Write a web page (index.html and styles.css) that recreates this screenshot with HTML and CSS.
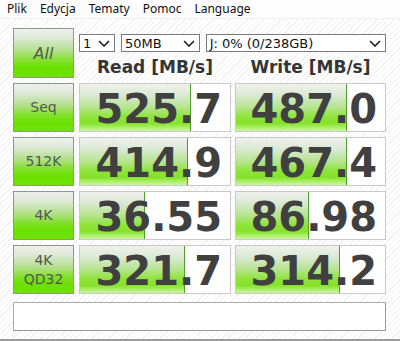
FILE: index.html
```html
<!DOCTYPE html>
<html>
<head>
<meta charset="utf-8">
<link rel="stylesheet" href="styles.css">
</head>
<body>
<div class="menubar">
  <span class="menu-item">Plik</span>
  <span class="menu-item">Edycja</span>
  <span class="menu-item">Tematy</span>
  <span class="menu-item">Pomoc</span>
  <span class="menu-item">Language</span>
</div>
<div class="main">
  <div class="grid">
    <div class="btn btn-all">All</div>
    <div class="top">
      <div class="combos">
        <div class="combo combo-count"><span>1</span><svg class="chev" width="12" height="7" viewBox="0 0 12 7"><path d="M1 1 L6 6 L11 1" fill="none" stroke="#1e1e1e" stroke-width="1.6"/></svg></div>
        <div class="combo combo-size"><span>50MB</span><svg class="chev" width="12" height="7" viewBox="0 0 12 7"><path d="M1 1 L6 6 L11 1" fill="none" stroke="#1e1e1e" stroke-width="1.6"/></svg></div>
        <div class="combo combo-drive"><span>J: 0% (0/238GB)</span><svg class="chev" width="12" height="7" viewBox="0 0 12 7"><path d="M1 1 L6 6 L11 1" fill="none" stroke="#1e1e1e" stroke-width="1.6"/></svg></div>
      </div>
      <div class="heads">
        <div class="head head-read">Read [MB/s]</div>
        <div class="head head-write">Write [MB/s]</div>
      </div>
    </div>

    <div class="btn">Seq</div>
    <div class="val"><div class="bar" style="width:110px"></div><span class="num">525.7</span></div>
    <div class="val"><div class="bar" style="width:110px"></div><span class="num">487.0</span></div>

    <div class="btn">512K</div>
    <div class="val"><div class="bar" style="width:107px"></div><span class="num">414.9</span></div>
    <div class="val"><div class="bar" style="width:110px"></div><span class="num">467.4</span></div>

    <div class="btn">4K</div>
    <div class="val"><div class="bar" style="width:64px"></div><span class="num">36.55</span></div>
    <div class="val"><div class="bar" style="width:72px"></div><span class="num">86.98</span></div>

    <div class="btn btn-two">4K<br>QD32</div>
    <div class="val"><div class="bar" style="width:104px"></div><span class="num">321.7</span></div>
    <div class="val"><div class="bar" style="width:103px"></div><span class="num">314.2</span></div>
  </div>
  <div class="comment"></div>
</div>
<div class="bottomline"></div>
</body>
</html>
```

FILE: styles.css
```css
html, body {
  margin: 0;
  padding: 0;
}
body {
  width: 400px;
  height: 341px;
  overflow: hidden;
  background-color: #ffffff;
  background-image: repeating-linear-gradient(-45deg, #ffffff 0px, #ffffff 3px, #f1f1f1 3px, #f1f1f1 4px);
  font-family: "Noto Sans", "DejaVu Sans", sans-serif;
}
.menubar {
  height: 18px;
  background: #fdfdfd;
  border-bottom: 1px solid #efefef;
  display: flex;
  align-items: center;
  padding-left: 7px;
  font-family: "Noto Sans", sans-serif;
  font-size: 12px;
  color: #111;
}
.menu-item {
  margin-right: 13px;
  line-height: 18px;
}
.main {
  padding: 9px 0 0 13px;
}
.grid {
  display: grid;
  grid-template-columns: 62px 152px 151px;
  grid-template-rows: 50px 49px 49px 49px 49px;
  column-gap: 4px;
  row-gap: 5px;
}
.btn {
  width: 61px;
  box-sizing: border-box;
  border: 1px solid #8a9a86;
  background: linear-gradient(to bottom, #eef1ec 0%, #dfe9da 18%, #b4e08c 45%, #7ee023 68%, #6ae000 82%, #70e206 100%);
  display: flex;
  align-items: center;
  justify-content: center;
  text-align: center;
  font-family: "DejaVu Sans", sans-serif;
  font-size: 14px;
  color: #505a50;
  line-height: 19px;
}
.btn-all {
  font-size: 16px;
  font-style: italic;
}
.top {
  grid-column: 2 / 4;
  display: flex;
  flex-direction: column;
}
.combos {
  display: flex;
  margin-top: 6px;
  gap: 6px;
}
.combo {
  box-sizing: border-box;
  height: 18px;
  border: 1px solid #7a7a7a;
  background: #fff;
  display: flex;
  align-items: center;
  justify-content: space-between;
  padding: 0 4px 0 3px;
  font-family: "DejaVu Sans", sans-serif;
  font-size: 13px;
  color: #111;
}
.combo-count { width: 36px; }
.combo-size { width: 79px; }
.combo-drive { width: 181px; }
.chev {
  display: block;
}
.heads {
  display: flex;
  gap: 4px;
  margin-top: 5px;
}
.head {
  font-family: "DejaVu Sans", sans-serif;
  font-weight: bold;
  font-size: 17px;
  line-height: 20px;
  color: #353535;
  text-align: center;
}
.head-read { width: 152px; }
.head-write { width: 151px; }
.val {
  position: relative;
  box-sizing: border-box;
  border: 1px solid #c9c9c9;
  background: #fff;
  display: flex;
  align-items: center;
  justify-content: flex-end;
  padding-right: 8px;
}
.bar {
  position: absolute;
  left: 0;
  top: 0;
  bottom: 0;
  border-right: 1px solid #4e9e2e;
  background: linear-gradient(to bottom, #eef2ec 0%, #dde9d7 22%, #b6e48e 50%, #8ee43a 70%, #86e22a 84%, #a8ee66 92%, #cdf6a4 100%);
}
.num {
  position: relative;
  font-family: "DejaVu Sans", sans-serif;
  font-weight: bold;
  font-size: 40px;
  line-height: 40px;
  color: #404040;
  margin-top: 3px;
}
.comment {
  margin-top: 8px;
  width: 373px;
  height: 29px;
  box-sizing: border-box;
  border: 1px solid #ababab;
  border-bottom-color: #9a9a9a;
  border-right-color: #9a9a9a;
  background: #fff;
}
.bottomline {
  margin-top: 8px;
  height: 2px;
  background: #9c9c9c;
}
```
